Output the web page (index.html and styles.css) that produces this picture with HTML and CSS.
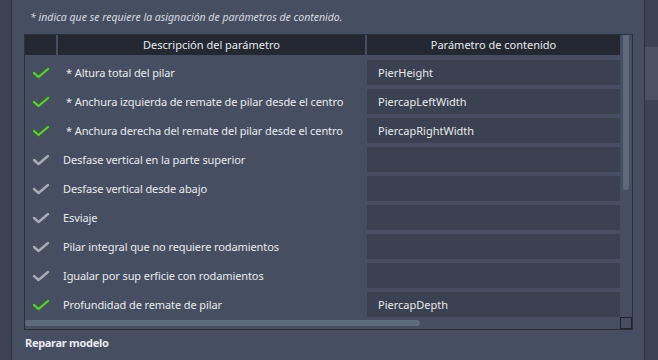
FILE: index.html
```html
<!DOCTYPE html>
<html lang="es">
<head>
    <meta charset="UTF-8">
    <title>Parámetros de contenido</title>
    <link rel="stylesheet" href="styles.css">
</head>
<body>
<div class="frame">
    <div class="side-left"></div>
    <div class="panel">
        <p class="note">* indica que se requiere la asignación de parámetros de contenido.</p>

        <div class="table">
            <div class="grid">
                <div class="head">
                    <div class="hcell"></div>
                    <div class="hcell">Descripción del parámetro</div>
                    <div class="hcell">Parámetro de contenido</div>
                </div>

                <div class="rows">
                    <div class="row">
                        <div class="chk ok"><svg viewBox="0 0 18 12"><path class="edge" d="M2 6 L6.5 10 L16 2"/><path d="M2 6 L6.5 10 L16 2"/></svg></div>
                        <div class="desc req">* Altura total del pilar</div>
                        <div class="param">PierHeight</div>
                    </div>
                    <div class="row">
                        <div class="chk ok"><svg viewBox="0 0 18 12"><path class="edge" d="M2 6 L6.5 10 L16 2"/><path d="M2 6 L6.5 10 L16 2"/></svg></div>
                        <div class="desc req">* Anchura izquierda de remate de pilar desde el centro</div>
                        <div class="param">PiercapLeftWidth</div>
                    </div>
                    <div class="row">
                        <div class="chk ok"><svg viewBox="0 0 18 12"><path class="edge" d="M2 6 L6.5 10 L16 2"/><path d="M2 6 L6.5 10 L16 2"/></svg></div>
                        <div class="desc req">* Anchura derecha del remate del pilar desde el centro</div>
                        <div class="param">PiercapRightWidth</div>
                    </div>
                    <div class="row">
                        <div class="chk"><svg viewBox="0 0 18 12"><path d="M2 6 L6.5 10 L16 2"/></svg></div>
                        <div class="desc">Desfase vertical en la parte superior</div>
                        <div class="param"></div>
                    </div>
                    <div class="row">
                        <div class="chk"><svg viewBox="0 0 18 12"><path d="M2 6 L6.5 10 L16 2"/></svg></div>
                        <div class="desc">Desfase vertical desde abajo</div>
                        <div class="param"></div>
                    </div>
                    <div class="row">
                        <div class="chk"><svg viewBox="0 0 18 12"><path d="M2 6 L6.5 10 L16 2"/></svg></div>
                        <div class="desc">Esviaje</div>
                        <div class="param"></div>
                    </div>
                    <div class="row">
                        <div class="chk"><svg viewBox="0 0 18 12"><path d="M2 6 L6.5 10 L16 2"/></svg></div>
                        <div class="desc">Pilar integral que no requiere rodamientos</div>
                        <div class="param"></div>
                    </div>
                    <div class="row">
                        <div class="chk"><svg viewBox="0 0 18 12"><path d="M2 6 L6.5 10 L16 2"/></svg></div>
                        <div class="desc">Igualar por sup erficie con rodamientos</div>
                        <div class="param"></div>
                    </div>
                    <div class="row">
                        <div class="chk ok"><svg viewBox="0 0 18 12"><path class="edge" d="M2 6 L6.5 10 L16 2"/><path d="M2 6 L6.5 10 L16 2"/></svg></div>
                        <div class="desc">Profundidad de remate de pilar</div>
                        <div class="param">PiercapDepth</div>
                    </div>
                </div>

                <div class="hscroll"><div class="hthumb"></div></div>
            </div>

            <div class="vscroll">
                <div class="vthumb"></div>
                <div class="corner"></div>
            </div>
        </div>

        <div class="footer">Reparar modelo</div>
    </div>
    <div class="side-right">
        <div class="side-tab"></div>
    </div>
</div>
</body>
</html>
```

FILE: styles.css
```css
:root {
    --panel: #464f61;
    --strip: #3c4453;
    --line: #2b3039;
    --head: #232833;
    --cell: #3a4150;
    --thumb: #5e6a7d;
    --text: #e8eaee;
}

body {
    margin: 0;
    font-family: 'Noto Sans', 'Open Sans', sans-serif;
    font-size: 11px;
    color: var(--text);
    background: var(--panel);
}

.frame {
    display: flex;
    height: 360px;
}

.side-left {
    width: 11px;
    background: var(--strip);
    border-right: 1px solid var(--line);
}

.panel {
    width: 632px;
    background: var(--panel);
}

.side-right {
    width: 13px;
    background: var(--strip);
    border-left: 1px solid var(--line);
}

.side-tab {
    margin-top: 47px;
    height: 53px;
    background: #4a5262;
}

.note {
    margin: 0;
    height: 34px;
    line-height: 34px;
    padding-left: 18px;
    font-size: 10.5px;
    font-style: italic;
    color: #d6dae0;
}

/* tabla de parametros */
.table {
    display: flex;
    margin-left: 12px;
    width: 607px;
    height: 294px;
    border: 1px solid var(--line);
}

.grid {
    width: 595px;
    display: flex;
    flex-direction: column;
}

.head,
.row {
    display: grid;
    grid-template-columns: 31px 307px 253px;
    column-gap: 2px;
}

.head {
    height: 20px;
}

.hcell {
    background: var(--head);
    text-align: center;
    line-height: 20px;
}

.rows {
    flex: 1;
    display: flex;
    flex-direction: column;
    gap: 4px;
    padding-top: 5px;
}

.row {
    height: 25px;
    line-height: 25px;
}

.chk {
    display: flex;
    align-items: center;
    padding-left: 7px;
}

.chk svg {
    width: 18px;
    height: 12px;
    fill: none;
    stroke: #a6acb7;
    stroke-width: 2.4;
    stroke-linecap: round;
    stroke-linejoin: round;
}

.chk.ok svg {
    stroke: #6cc24a;
    stroke-width: 2.2;
}

.chk.ok svg .edge {
    stroke: #2f6a2c;
    stroke-width: 3.8;
}

.desc {
    padding-left: 5px;
    white-space: nowrap;
    letter-spacing: -0.1px;
}

.desc.req {
    padding-left: 8px;
}

.param {
    background: var(--cell);
    padding-left: 11px;
}

.hscroll {
    height: 12px;
    display: flex;
    align-items: center;
}

.hthumb {
    width: 395px;
    height: 6px;
    border-radius: 3px;
    background: var(--thumb);
}

.vscroll {
    width: 12px;
    display: flex;
    flex-direction: column;
    justify-content: space-between;
    align-items: center;
}

.vthumb {
    width: 6px;
    height: 155px;
    border-radius: 0 0 3px 3px;
    background: var(--thumb);
}

.corner {
    width: 10px;
    height: 10px;
    border: 1px solid #1e222a;
}

.footer {
    padding: 5px 0 0 13px;
    font-weight: bold;
    letter-spacing: -0.3px;
}
```
